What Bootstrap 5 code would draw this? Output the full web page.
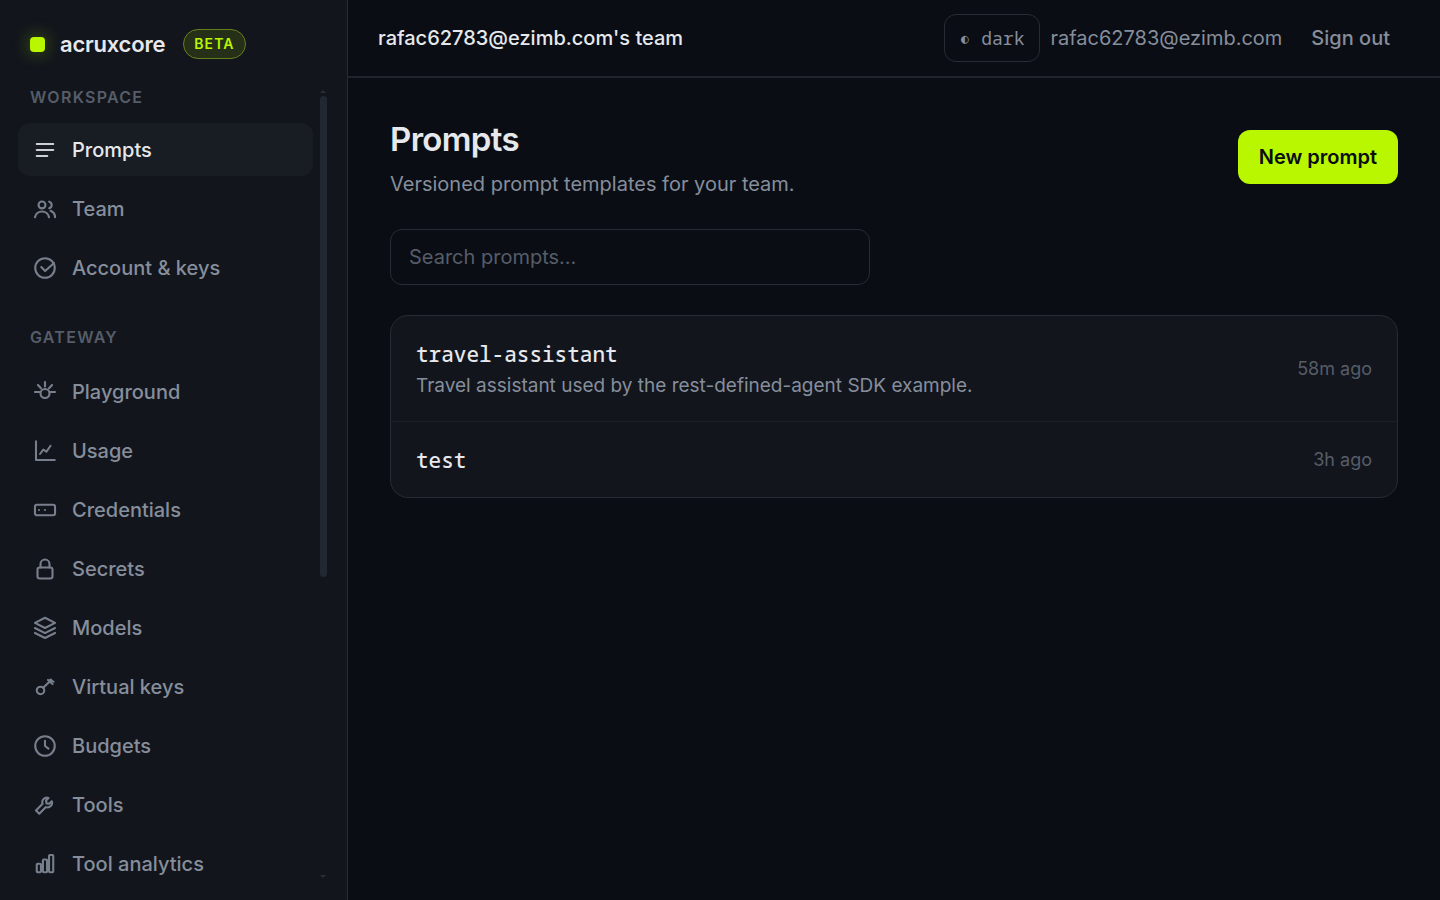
<!DOCTYPE html>
<html lang="en" data-bs-theme="dark">
<head>
<meta charset="utf-8">
<meta name="viewport" content="width=device-width, initial-scale=1">
<title>Prompts · acruxcore</title>
<link href="https://cdn.jsdelivr.net/npm/bootstrap@5.3.0/dist/css/bootstrap.min.css" rel="stylesheet">
<style>
  :root {
    --ac-bg: #0a0d14;
    --ac-panel: #12151c;
    --ac-raised: #181c23;
    --ac-line: #272c34;
    --ac-text: #e6e8ec;
    --ac-muted: #868e9c;
    --ac-faint: #565d69;
    --ac-lime: #b8f700;
    --ac-mono: "Noto Sans Mono", "DejaVu Sans Mono", monospace;
  }
  body { background: var(--ac-bg); color: var(--ac-text); font-family: Inter, sans-serif; font-size: 20px; line-height: 30px; }
  a { color: inherit; text-decoration: none; }

  .side-panel { width: 348px; background: var(--ac-panel); border-right: 1px solid var(--ac-line); }
  .brand-row { padding: 29px 30px 0; gap: 15px; height: 87px; }
  .brand-link { gap: 15px; }
  .brand-mark { width: 15px; height: 15px; border-radius: 4px; background: var(--ac-lime); box-shadow: 0 0 18px rgba(184, 247, 0, .4); }
  .brand-name { font-size: 22px; font-weight: 600; letter-spacing: -0.01em; }
  .beta-pill { font-size: 14px; line-height: 20px; font-weight: 600; letter-spacing: .08em; color: var(--ac-lime); background: #262f18; border: 1px solid #65801a; border-radius: 15px; padding: 4px 10px; margin-left: 3px; }
  .side-scroll { padding-left: 18px; padding-right: 20px; padding-bottom: 22px; gap: 7px; }
  .side-nav { overflow: hidden; margin-bottom: -22px; }
  .group-title { font-size: 16px; line-height: 20px; font-weight: 600; letter-spacing: .08em; color: var(--ac-faint); padding: 0 12px; margin: 0 0 16px; }
  .group-title.later { margin-top: 33px; margin-bottom: 18px; }
  .side-list { gap: 6px; }
  .side-link { height: 53px; flex: none; padding: 0 15px; gap: 15px; border-radius: 12px; font-weight: 500; color: var(--ac-muted); }
  .side-link.active { background: var(--ac-raised); color: var(--ac-text); }
  .side-link svg { width: 24px; height: 24px; flex: none; fill: none; stroke: currentColor; stroke-width: 1.4; stroke-linecap: round; stroke-linejoin: round; opacity: .88; }
  .scroll-track { width: 7px; gap: 3px; padding-top: 3px; }
  .scroll-thumb { flex: 0 0 61%; border-radius: 4px; background: #222831; }
  .arrow-up, .arrow-down { border-left: 3px solid transparent; border-right: 3px solid transparent; width: 6px; }
  .arrow-up { border-bottom: 3px solid #292e37; }
  .arrow-down { border-top: 3px solid #292e37; }

  .top-bar { height: 78px; border-bottom: 2px solid #1f232b; padding: 0 27px 0 30px; }
  .team-name { font-weight: 500; }
  .theme-btn { height: 48px; border: 1px solid var(--ac-line); border-radius: 12px; background: none; color: var(--ac-muted); font-family: var(--ac-mono); font-size: 18px; padding: 0 15px; }
  .signout-btn { background: none; border: 0; color: var(--ac-muted); font-weight: 500; padding: 0 23px; margin-left: 6px; }
  .user-mail { color: var(--ac-muted); margin-left: 10px; }

  .page-body { padding: 37px 42px; }
  .page-title { font-size: 33px; line-height: 48px; font-weight: 600; letter-spacing: -0.02em; margin: 0 0 7px; color: var(--ac-text); }
  .page-sub { color: var(--ac-muted); line-height: 28px; margin: 0; }
  .new-btn { height: 54px; border: 0; border-radius: 12px; background: var(--ac-lime); color: #0a0d14; font-weight: 600; padding: 0 21px; }
  .search-box { max-width: 480px; height: 56px; background: transparent; border: 1px solid var(--ac-line); border-radius: 12px; font-size: 20px; padding: 0 18px; margin-top: 31px; }
  .search-box::placeholder { color: var(--ac-faint); }
  .prompt-list { margin-top: 30px; background: var(--ac-panel); border: 1px solid var(--ac-line); border-radius: 18px; overflow: hidden; }
  .prompt-row { padding: 22px 25px 21px; }
  .prompt-row + .prompt-row { border-top: 1px solid #1b2027; }
  .prompt-name { font-family: var(--ac-mono); font-size: 21px; line-height: 32px; font-weight: 500; }
  .prompt-desc { font-size: 19px; line-height: 28px; margin-top: 2px; color: var(--ac-muted); }
  .prompt-time { font-size: 18px; color: var(--ac-faint); }
</style>
</head>
<body>
<div class="d-flex vh-100 overflow-hidden">
  <aside class="side-panel d-flex flex-column flex-shrink-0">
    <div class="brand-row d-flex align-items-start flex-shrink-0">
      <a href="#" class="brand-link d-flex align-items-center"><span class="brand-mark"></span><span class="brand-name">acruxcore</span></a>
      <span class="beta-pill">BETA</span>
    </div>
    <div class="side-scroll d-flex flex-grow-1 overflow-hidden">
      <nav class="side-nav flex-grow-1" aria-label="Main">
        <h2 class="group-title">WORKSPACE</h2>
        <div class="side-list d-flex flex-column">
          <a href="#" class="side-link active d-flex align-items-center" aria-current="page"><svg viewBox="0 0 16 16"><path d="M2.500 4h11M2.500 8h11M2.500 12h7"/></svg>Prompts</a>
          <a href="#" class="side-link d-flex align-items-center"><svg viewBox="0 0 16 16"><circle cx="6" cy="5.300" r="2.300"/><path d="M1.300 13.500a4.800 4.800 0 0 1 9.400 0M10.800 3.100a2.300 2.300 0 0 1 0 4.400M11.700 9.200a4.700 4.700 0 0 1 3 4.300"/></svg>Team</a>
          <a href="#" class="side-link d-flex align-items-center"><svg viewBox="0 0 16 16"><circle cx="8" cy="8" r="6.500"/><path d="M5.500 7.400l2.600 2.600L14 4.700"/></svg>Account &amp; keys</a>
        </div>
        <h2 class="group-title later">GATEWAY</h2>
        <div class="side-list d-flex flex-column">
          <a href="#" class="side-link d-flex align-items-center"><svg viewBox="0 0 16 16"><circle cx="8" cy="9" r="3"/><path d="M8 1.300v3M3.300 3.300l2 2.200M12.700 3.300l-2 2.200M1.300 8h3M11.700 8h3"/></svg>Playground</a>
          <a href="#" class="side-link d-flex align-items-center"><svg viewBox="0 0 16 16"><path d="M2 1.500V14h12.500M4.700 10l2.200-3 2 1.500 2.800-4"/></svg>Usage</a>
          <a href="#" class="side-link d-flex align-items-center"><svg viewBox="0 0 16 16"><rect x="1.300" y="4.500" width="13.400" height="7" rx="1.300"/><path d="M4 8h.01M8 8h.01"/></svg>Credentials</a>
          <a href="#" class="side-link d-flex align-items-center"><svg viewBox="0 0 16 16"><rect x="3" y="7" width="10" height="7.300" rx="1.500"/><path d="M5 7V4.700a3 3 0 0 1 6 0V7"/></svg>Secrets</a>
          <a href="#" class="side-link d-flex align-items-center"><svg viewBox="0 0 16 16"><path d="M8 1.200l6.700 3.400L8 8 1.300 4.600zM1.300 8L8 11.400 14.700 8M1.300 11.300L8 14.700l6.700-3.400"/></svg>Models</a>
          <a href="#" class="side-link d-flex align-items-center"><svg viewBox="0 0 16 16"><circle cx="5" cy="10.300" r="2.500"/><path d="M6.800 8.500l5.400-5.200M10 3.300l3 2.700M11.500 3l2.200 1.500"/></svg>Virtual keys</a>
          <a href="#" class="side-link d-flex align-items-center"><svg viewBox="0 0 16 16"><circle cx="8" cy="8" r="6.500"/><path d="M8 4.500V8l2.300 1.700"/></svg>Budgets</a>
          <a href="#" class="side-link d-flex align-items-center"><svg viewBox="0 0 16 16"><path d="M10.300 3.300a3 3 0 0 0-3.900 3.900L2 11.600 4.200 13.800l4.400-4.400a3 3 0 0 0 3.900-3.900L10.800 7.200 9 6.900 8.700 5z"/></svg>Tools</a>
          <a href="#" class="side-link d-flex align-items-center"><svg viewBox="0 0 16 16"><rect x="2.500" y="7.800" width="2.800" height="5.700" rx=".6"/><rect x="6.600" y="5" width="2.800" height="8.500" rx=".6"/><rect x="10.700" y="2" width="2.800" height="11.500" rx=".6"/></svg>Tool analytics</a>
        </div>
      </nav>
      <div class="scroll-track d-flex flex-column flex-shrink-0" aria-hidden="true">
        <span class="arrow-up"></span><span class="scroll-thumb"></span><span class="arrow-down mt-auto"></span>
      </div>
    </div>
  </aside>

  <div class="flex-grow-1 d-flex flex-column overflow-hidden">
    <header class="top-bar d-flex align-items-center justify-content-between flex-shrink-0">
      <span class="team-name">rafac62783@ezimb.com's team</span>
      <div class="d-flex align-items-center">
        <button type="button" class="theme-btn">◐ dark</button>
        <span class="user-mail">rafac62783@ezimb.com</span>
        <button type="button" class="signout-btn">Sign out</button>
      </div>
    </header>
    <main class="page-body">
      <div class="d-flex align-items-center justify-content-between">
        <div>
          <h1 class="page-title">Prompts</h1>
          <p class="page-sub">Versioned prompt templates for your team.</p>
        </div>
        <button type="button" class="new-btn">New prompt</button>
      </div>
      <input type="search" class="search-box form-control" placeholder="Search prompts…" aria-label="Search prompts">
      <div class="prompt-list">
        <a href="#" class="prompt-row d-flex align-items-center justify-content-between">
          <div><div class="prompt-name">travel-assistant</div><div class="prompt-desc">Travel assistant used by the rest-defined-agent SDK example.</div></div>
          <span class="prompt-time">58m ago</span>
        </a>
        <a href="#" class="prompt-row d-flex align-items-center justify-content-between">
          <div class="prompt-name">test</div>
          <span class="prompt-time">3h ago</span>
        </a>
      </div>
    </main>
  </div>
</div>
<script src="https://cdn.jsdelivr.net/npm/bootstrap@5.3.0/dist/js/bootstrap.bundle.min.js"></script>
</body>
</html>
